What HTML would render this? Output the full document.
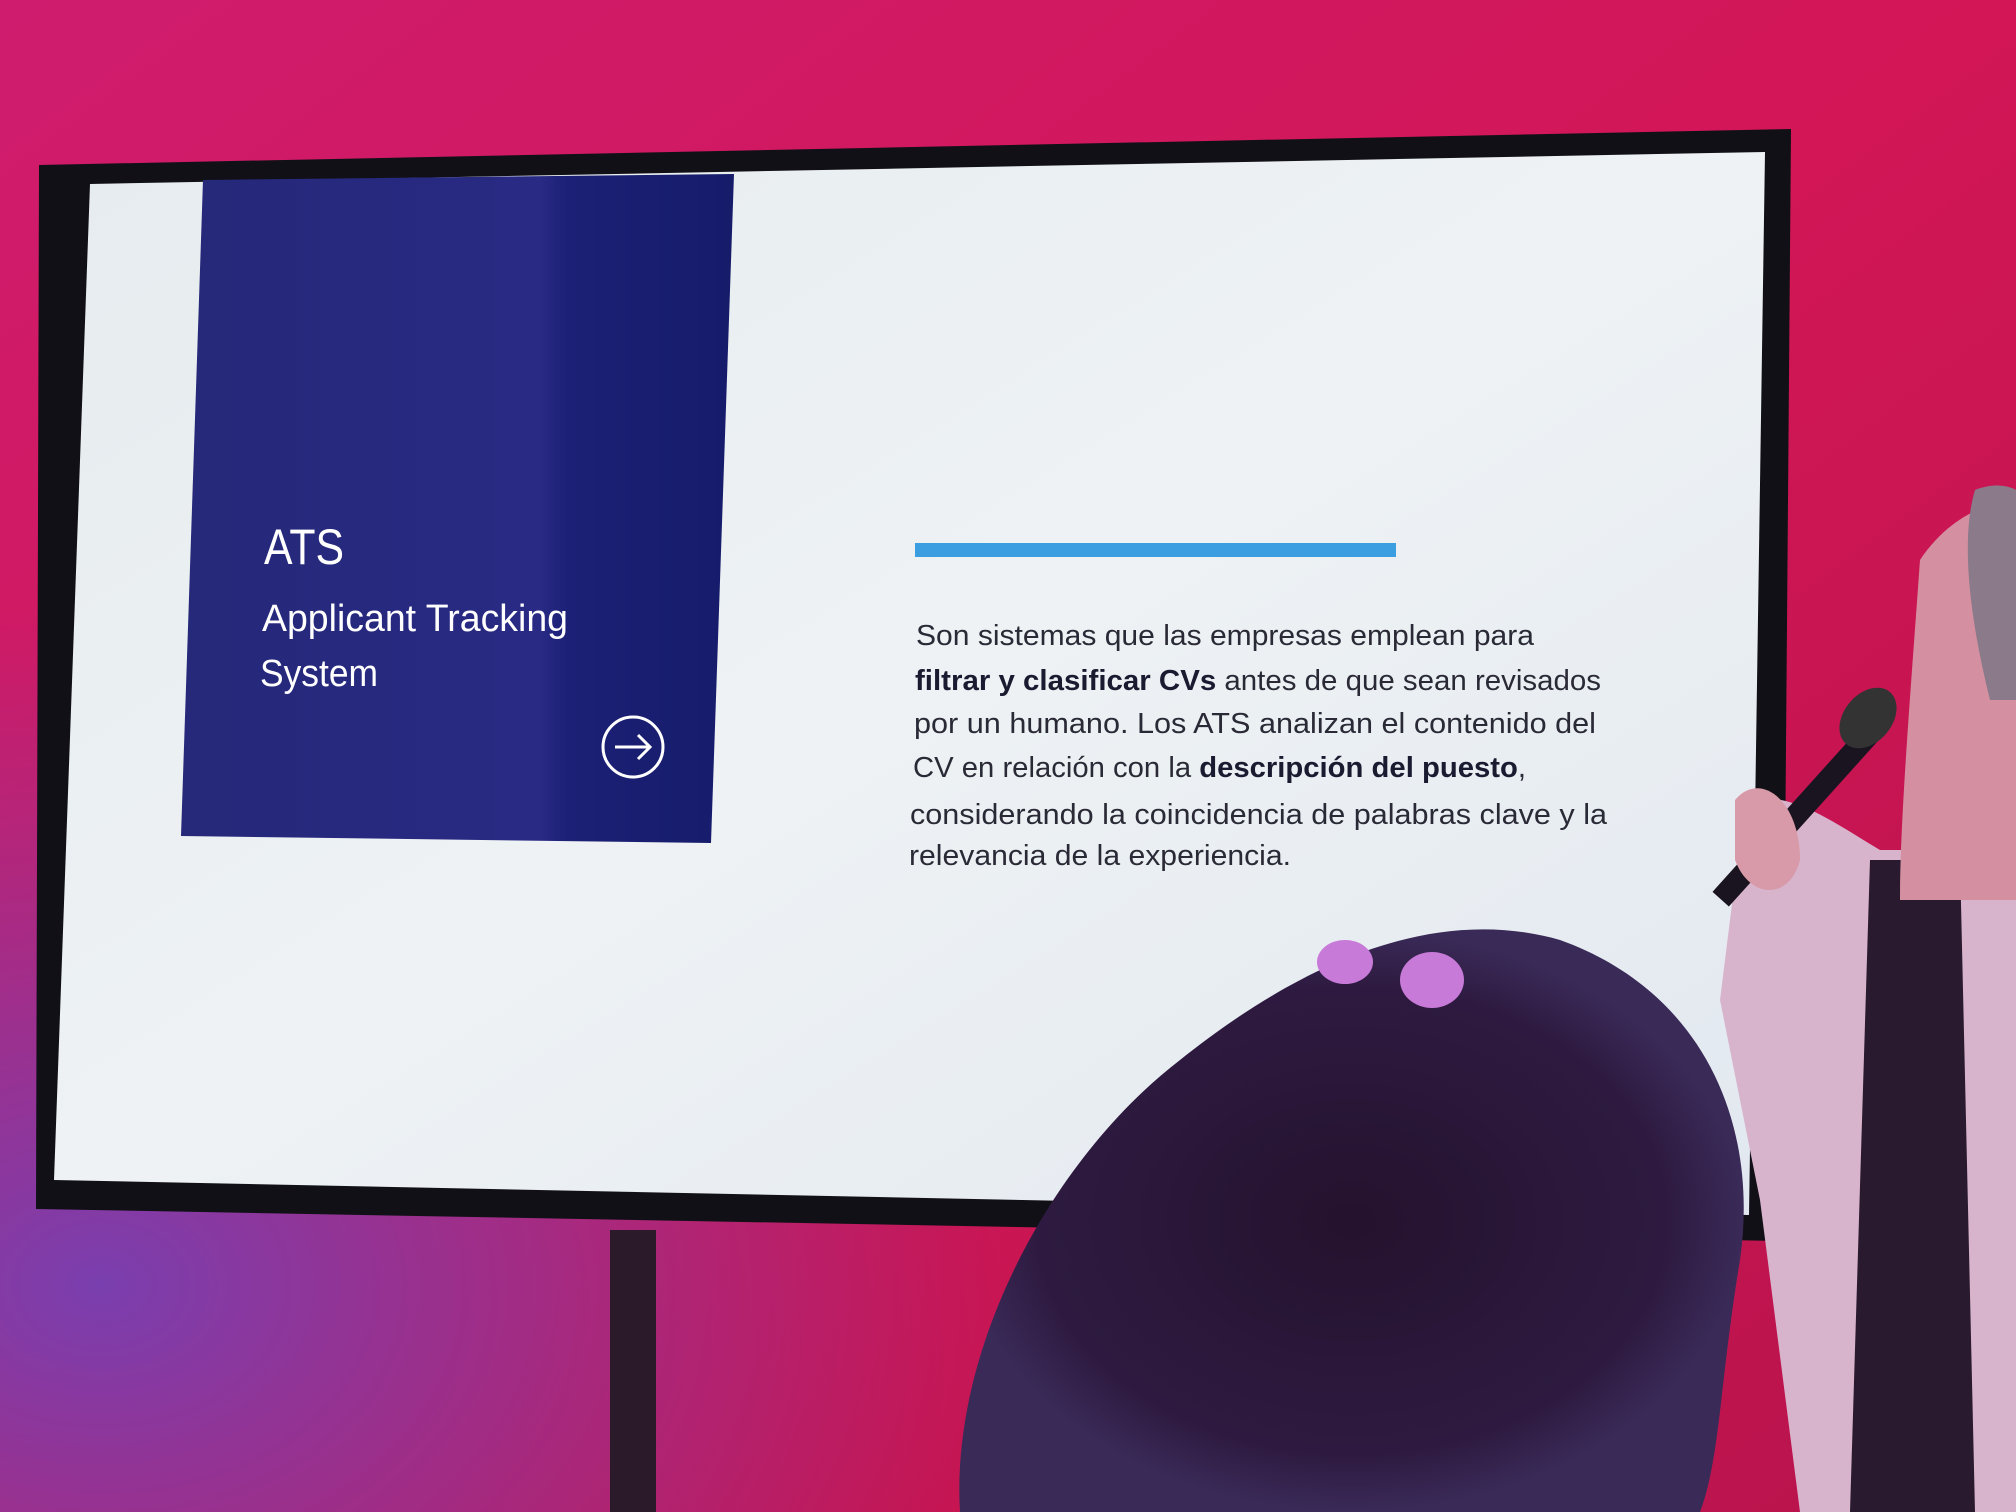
<!DOCTYPE html>
<html><head><meta charset="utf-8"><style>
html,body{margin:0;padding:0;width:2016px;height:1512px;overflow:hidden;background:#c8175a}
svg{display:block}
</style></head><body>
<svg width="2016" height="1512" viewBox="0 0 2016 1512" xmlns="http://www.w3.org/2000/svg">
<defs>
<linearGradient id="bg" x1="0" y1="0" x2="1" y2="1">
<stop offset="0" stop-color="#d01c6e"/>
<stop offset="0.5" stop-color="#d21656"/>
<stop offset="1" stop-color="#b8144c"/>
</linearGradient>
<radialGradient id="lp" cx="0.05" cy="0.85" r="0.45">
<stop offset="0" stop-color="#7a3fae"/>
<stop offset="1" stop-color="#7a3fae" stop-opacity="0"/>
</radialGradient>
<linearGradient id="panel" x1="0" y1="0" x2="1" y2="0">
<stop offset="0" stop-color="#262879"/>
<stop offset="0.65" stop-color="#282a84"/>
<stop offset="0.7" stop-color="#1c2076"/>
<stop offset="1" stop-color="#161c6a"/>
</linearGradient>
<linearGradient id="scr" x1="0" y1="0" x2="1" y2="1">
<stop offset="0" stop-color="#e6ecef"/>
<stop offset="0.5" stop-color="#eef2f4"/>
<stop offset="1" stop-color="#e2e8f0"/>
</linearGradient>
<radialGradient id="hair" cx="0.5" cy="0.5" r="0.5">
<stop offset="0" stop-color="#24122e"/>
<stop offset="0.8" stop-color="#2e1a40"/>
<stop offset="1" stop-color="#3a2a58"/>
</radialGradient>
</defs>
<rect width="2016" height="1512" fill="url(#bg)"/>
<rect width="2016" height="1512" fill="url(#lp)"/>
<rect x="610" y="1230" width="46" height="282" fill="#2a1a2a"/>
<polygon points="39,165 1791,129 1782,1241 36,1209" fill="#111016"/>
<polygon points="90,184 1765,152 1749,1215 54,1180" fill="url(#scr)"/>
<polygon points="203,180 734,174 711,843 181,836" fill="url(#panel)"/>
<text x="264" y="564" font-family="Liberation Sans, sans-serif" font-size="50" fill="#fff" textLength="80" lengthAdjust="spacingAndGlyphs">ATS</text>
<text x="262" y="631" font-family="Liberation Sans, sans-serif" font-size="38" fill="#fff" textLength="306" lengthAdjust="spacingAndGlyphs">Applicant Tracking</text>
<text x="260" y="686" font-family="Liberation Sans, sans-serif" font-size="38" fill="#fff" textLength="118" lengthAdjust="spacingAndGlyphs">System</text>
<circle cx="633" cy="747" r="30" fill="none" stroke="#fff" stroke-width="3"/>
<path d="M615 747 H650 M638 735 L650 747 L638 759" fill="none" stroke="#fff" stroke-width="3"/>
<polygon points="915,543 1396,543 1396,557 915,557" fill="#3a9ee0"/>
<g font-family="Liberation Sans, sans-serif" font-size="29" fill="#2a2a36">
<text x="916" y="645" textLength="618" lengthAdjust="spacingAndGlyphs">Son sistemas que las empresas emplean para</text>
<text x="915" y="690" textLength="686" lengthAdjust="spacingAndGlyphs"><tspan font-weight="bold" fill="#1a1a30">filtrar y clasificar CVs</tspan> antes de que sean revisados</text>
<text x="914" y="733" textLength="682" lengthAdjust="spacingAndGlyphs">por un humano. Los ATS analizan el contenido del</text>
<text x="913" y="777" textLength="613" lengthAdjust="spacingAndGlyphs">CV en relación con la <tspan font-weight="bold" fill="#1a1a30">descripción del puesto</tspan>,</text>
<text x="910" y="824" textLength="697" lengthAdjust="spacingAndGlyphs">considerando la coincidencia de palabras clave y la</text>
<text x="909" y="865" textLength="382" lengthAdjust="spacingAndGlyphs">relevancia de la experiencia.</text>
</g>
<!-- speaker -->
<path d="M1745 800 C1790 790 1830 820 1880 850 L2016 850 L2016 1512 L1800 1512 L1760 1200 L1720 1000 Z" fill="#d8b4cc"/>
<path d="M1870 860 L1960 860 L1975 1512 L1850 1512 Z" fill="#2a1a30"/>
<path d="M1920 560 C1960 500 2016 500 2016 500 L2016 900 L1900 900 C1900 820 1910 700 1920 560 Z" fill="#d490a0"/>
<path d="M1975 490 C2000 480 2016 490 2016 490 L2016 700 L1990 700 C1970 620 1960 540 1975 490 Z" fill="#8a7a8a"/>
<rect x="1790" y="690" width="22" height="240" fill="#1a1420" transform="rotate(42 1801 810)"/>
<ellipse cx="1868" cy="718" rx="24" ry="34" fill="#333" transform="rotate(40 1868 718)"/>
<path d="M1735 800 C1760 770 1800 800 1800 860 C1790 900 1750 900 1735 860 Z" fill="#d89aa8"/>
<!-- head in front -->
<path d="M960 1512 C950 1350 1050 1160 1180 1060 C1280 980 1420 900 1560 940 C1700 990 1760 1120 1740 1260 C1720 1380 1720 1460 1700 1512 Z" fill="url(#hair)"/>
<ellipse cx="1345" cy="962" rx="28" ry="22" fill="#c87ad8"/>
<ellipse cx="1432" cy="980" rx="32" ry="28" fill="#c87ad8"/>
</svg>
</body></html>
